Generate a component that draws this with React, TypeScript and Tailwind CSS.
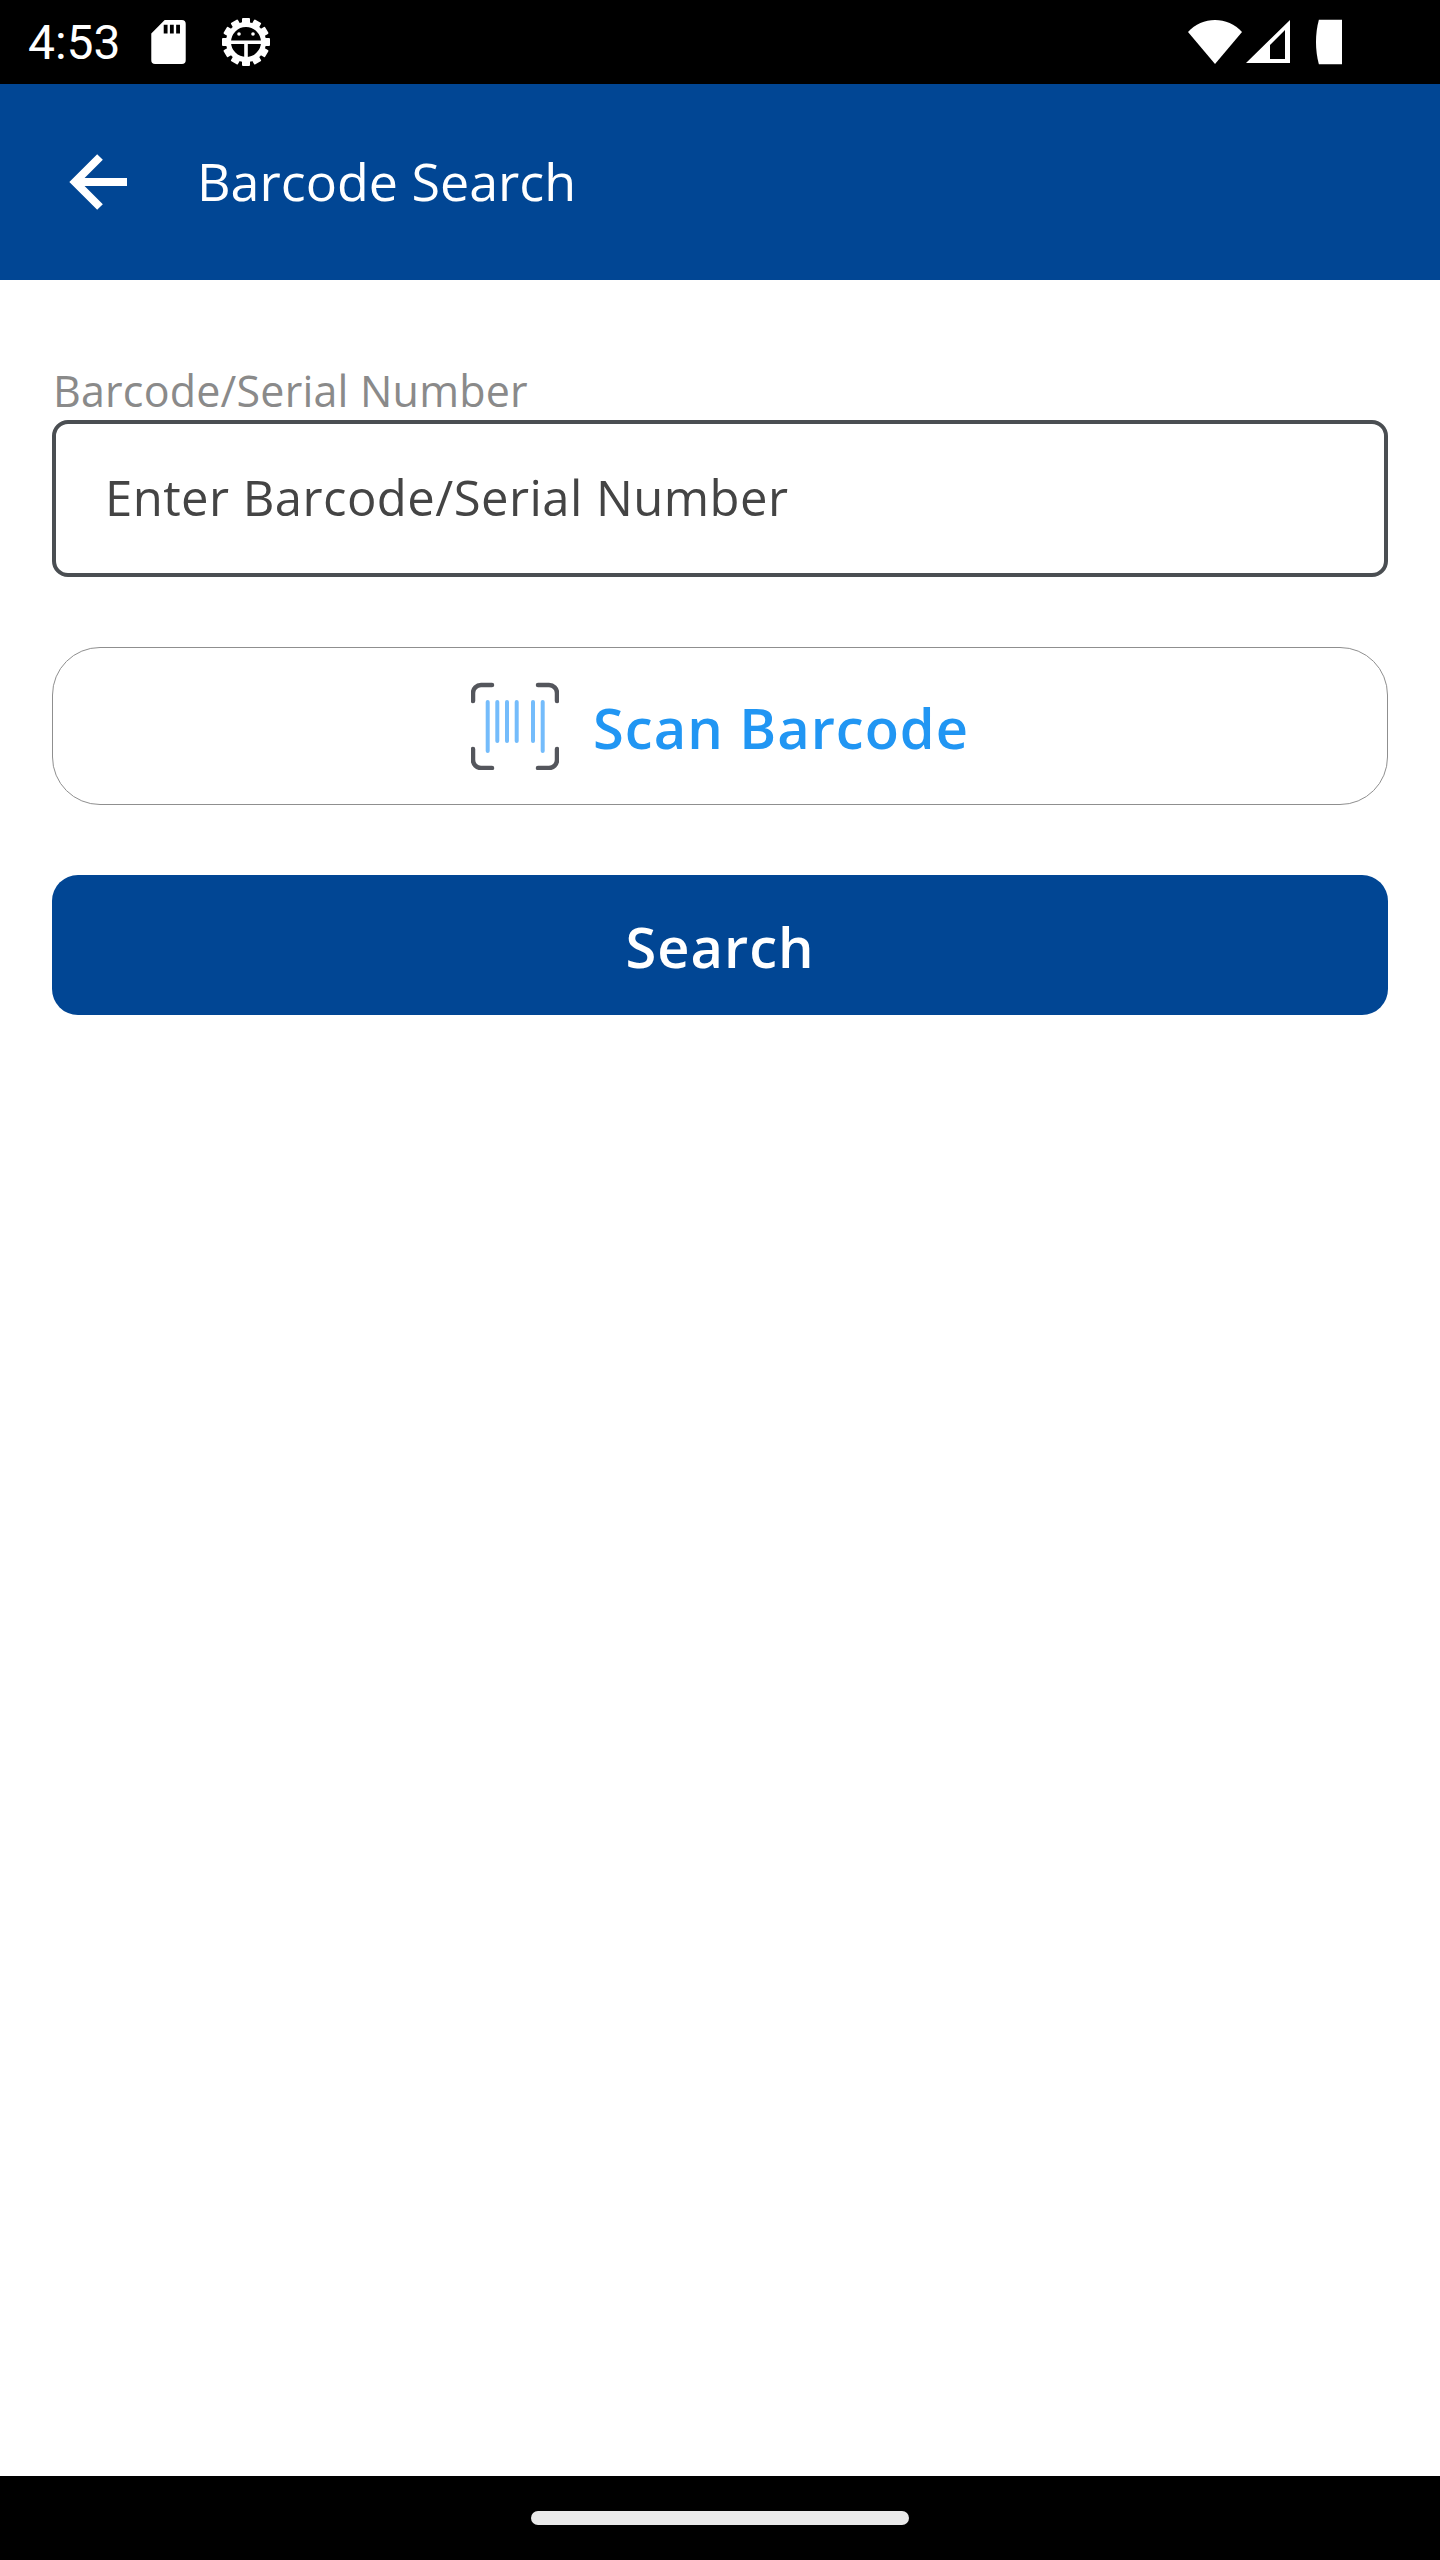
function SdCardIcon() {
  return (
    <svg width="35" height="44" viewBox="0 0 36 46">
      <path
        fill="#fff"
        fillRule="evenodd"
        d="M14 0H32a4 4 0 0 1 4 4V42a4 4 0 0 1-4 4H4a4 4 0 0 1-4-4V14ZM13 5v9h4V5ZM19.5 5v9h4V5ZM26 5v9h4V5Z"
      />
    </svg>
  );
}

function BugGearIcon() {
  const teeth = Array.from({ length: 12 }, (_, i) => i * 30);
  return (
    <svg width="50" height="50" viewBox="0 0 50 50">
      {teeth.map((deg) => (
        <rect key={deg} x="21" y="1" width="8" height="8" rx="1" fill="#fff" transform={`rotate(${deg} 25 25)`} />
      ))}
      <circle cx="25" cy="25" r="17.5" fill="none" stroke="#fff" strokeWidth="5" />
      <rect x="8" y="23.5" width="34" height="3.5" fill="#fff" />
      <rect x="23.2" y="25" width="3.6" height="17" fill="#fff" />
      <circle cx="18" cy="17" r="1.8" fill="#fff" />
      <circle cx="32" cy="17" r="1.8" fill="#fff" />
    </svg>
  );
}

function StatusIcons() {
  return (
    <div className="flex items-center">
      <svg width="54" height="46" viewBox="0 0 54 46">
        <path fill="#fff" d="M0 13C7 5 17 1 27 1s20 4 27 12L27 45Z" />
      </svg>
      <svg className="ml-[4px]" width="44" height="44" viewBox="0 0 44 44">
        <path fill="#fff" fillRule="evenodd" d="M44 0V43H0ZM39 10 24 25V39H39Z" />
      </svg>
      <svg className="ml-[26px]" width="26" height="46" viewBox="0 0 27 46">
        <path fill="#fff" d="M3 0H27V46H3C-1 32-1 14 3 0Z" />
      </svg>
    </div>
  );
}

function BarcodeIcon() {
  const bars = [
    { x: 47.7, long: true },
    { x: 57.3, long: false },
    { x: 67, long: false },
    { x: 76.7, long: false },
    { x: 93, long: false },
    { x: 102.7, long: true },
  ];
  return (
    <svg width="88" height="88" viewBox="31 23 88 88" fill="none">
      <path
        stroke="#54565c"
        strokeWidth="4.5"
        strokeLinecap="round"
        d="M33 42V34a8 8 0 0 1 8-8H52M98 26h11a8 8 0 0 1 8 8V42M33 90v11a8 8 0 0 0 8 8H52M98 109h11a8 8 0 0 0 8-8V90"
      />
      {bars.map((b) => (
        <line
          key={b.x}
          x1={b.x}
          x2={b.x}
          y1="43"
          y2={b.long ? 92 : 82}
          stroke="#74bcfb"
          strokeWidth="4"
          strokeLinecap="round"
        />
      ))}
    </svg>
  );
}

export default function App() {
  return (
    <div className="flex h-[2560px] w-[1440px] flex-col overflow-hidden bg-white font-['Open_Sans',sans-serif]">
      {/* status bar */}
      <div className="flex h-[84px] items-center justify-between bg-black pl-[28px] pr-[98px]">
        <div className="flex items-center">
          <span className="pt-[2px] font-['Roboto',sans-serif] text-[48px] leading-none text-white">4:53</span>
          <span className="ml-[30px] flex"><SdCardIcon /></span>
          <span className="ml-[35px] flex"><BugGearIcon /></span>
        </div>
        <StatusIcons />
      </div>

      {/* header */}
      <div className="flex h-[196px] items-center bg-[#014694] pl-[69px]">
        <svg width="60" height="60" viewBox="0 0 60 60" fill="none" stroke="#fff" strokeWidth="8">
          <path d="M58 30H6M31 5 6 30 31 55" />
        </svg>
        <h1 className="ml-[68px] pb-[3px] text-[52px] font-normal text-white">Barcode Search</h1>
      </div>

      {/* form */}
      <div className="flex flex-1 flex-col px-[52px] pt-[81px]">
        <label className="pl-[1px] text-[43px] leading-[59px] tracking-[0.2px] text-[#8a8a8a]">Barcode/Serial Number</label>
        <div className="flex h-[157px] items-center rounded-[16px] border-[4.5px] border-[#4a4e52] pb-[1px] pl-[49px] text-[49px] tracking-[0.45px] text-[#444444]">
          Enter Barcode/Serial Number
        </div>

        <button className="mt-[70px] flex h-[158px] items-center justify-center gap-[34px] rounded-[48px] border border-[#8f8f8f] bg-white">
          <BarcodeIcon />
          <span className="pt-[2px] text-[56px] font-semibold tracking-[1px] text-[#2196f3]">Scan Barcode</span>
        </button>

        <button className="mt-[70px] flex h-[140px] items-center justify-center rounded-[26px] bg-[#014694] pt-[2px] text-[56px] font-semibold tracking-[1px] text-white">
          Search
        </button>
      </div>

      {/* nav bar */}
      <div className="flex h-[84px] items-center justify-center bg-black">
        <div className="h-[14px] w-[378px] rounded-full bg-[#eaeaea]" />
      </div>
    </div>
  );
}
